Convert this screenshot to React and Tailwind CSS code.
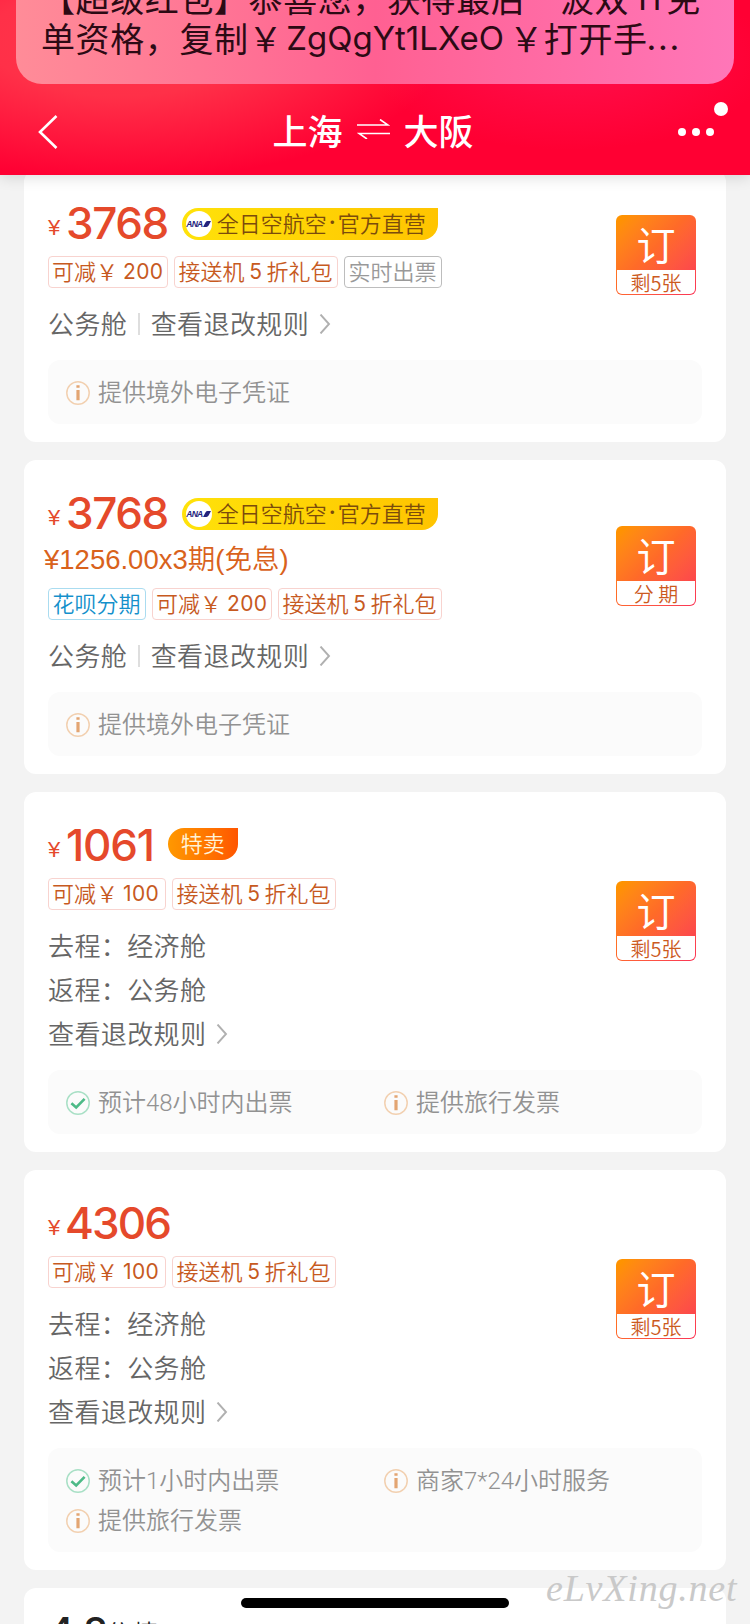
import React from 'react';

const Chevron = () => (
  <svg className="mt-[3px] ml-2.5 h-5 w-3 shrink-0" viewBox="0 0 12 20" fill="none" stroke="#b0b0b0" strokeWidth="1.9">
    <path d="M1.5 0.5L10 10L1.5 19.5" />
  </svg>
);

const InfoIcon = () => (
  <svg className="h-6 w-6 shrink-0" viewBox="0 0 24 24" fill="none">
    <circle cx="12" cy="12" r="11.2" stroke="#f2d0b0" strokeWidth="1.5" />
    <path d="M12 4.2V6.8M12 9V19.2" stroke="#e3a572" strokeWidth="3.2" />
  </svg>
);

const CheckIcon = () => (
  <svg className="h-6 w-6 shrink-0" viewBox="0 0 24 24" fill="none">
    <circle cx="12" cy="12" r="11.2" stroke="#a9e0c6" strokeWidth="1.5" />
    <path d="M5.4 12.2L10.2 16.5L18.6 7.8" stroke="#4dba87" strokeWidth="2.6" />
  </svg>
);

const AirlineBadge = () => (
  <div className="ml-3.5 flex h-8 w-64 shrink-0 items-center rounded-l-[16px] rounded-br-[16px] bg-linear-to-r from-[#ffe20a] to-[#ffc400] pl-1">
    <div className="flex h-[26px] w-[26px] items-center justify-center rounded-full bg-white">
      <span className="font-['Liberation_Sans'] text-[8.5px] leading-none font-bold tracking-[-0.8px] text-[#23237c] italic">ANA</span>
      <svg className="ml-px h-[6px] w-[8px]" viewBox="0 0 8 6">
        <path d="M0 6L2.6 1.2Q3.2 0 4.6 0H8L5.6 4.6Q4.8 6 3.4 6Z" fill="#23237c" />
      </svg>
    </div>
    <span className="ml-[5px] flex pb-1 text-[22px] leading-7 text-[#7b4b0c]">
      全日空航空<span className="w-[11px] text-center font-['Inter'] font-semibold">·</span>官方直营
    </span>
  </div>
);

const SaleBadge = () => (
  <div className="-mt-1 ml-3.5 flex h-8 w-[70px] items-center justify-center rounded-l-[16px] rounded-br-[16px] bg-linear-to-r from-[#ff9800] to-[#ff5500] pb-1 text-[22px] leading-none text-[#fff3d8]">
    特卖
  </div>
);

const Off = ({ value, narrow }) => (
  <div className={`flex h-8 items-center rounded-[4px] border border-[#f8d3cf] pb-[5px] pl-[3px] text-[#c75a1f] ${narrow ? 'w-[118px]' : 'w-[120px]'}`}>
    可减￥<span className="ml-[5px] pt-[3px] font-['Inter'] text-[21px] font-normal tracking-[0.4px]">{value}</span>
  </div>
);

const Gift = () => (
  <div className="flex h-8 w-[164px] items-center rounded-[4px] border border-[#f8d3cf] pb-[5px] pl-[3.5px] text-[#c75a1f]">
    接送机<span className="w-[22px] pt-[3px] text-center font-['Inter'] text-[21px] font-normal">5</span>折礼包
  </div>
);

const Instant = () => (
  <div className="flex h-8 w-[98px] items-center rounded-[4px] border border-[#bdbdbd] pb-[5px] pl-[3.5px] text-[#999]">实时出票</div>
);

const Huabei = () => (
  <div className="flex h-8 w-[98px] items-center rounded-[4px] border border-[#aadcf0] pb-[5px] pl-[3.5px] text-[#1490cb]">花呗分期</div>
);

const BookButton = ({ note }) => (
  <button className="flex h-20 w-20 flex-col rounded-[6px] bg-linear-to-br from-[#ff9300] from-5% via-[#ff6a28] via-45% to-[#fb3355] p-px">
    <span className="flex h-[54px] w-full items-center justify-center text-[39px] leading-none font-normal text-white">订</span>
    <span className="flex w-full grow items-center justify-center rounded-b-[5px] bg-white pt-px text-[20px] leading-none text-[#cc5a1e]">{note}</span>
  </button>
);

const Rules = () => (
  <span className="flex items-center">
    查看退改规则
    <Chevron />
  </span>
);

const Row = ({ children }) => <div className="flex h-11 items-center pb-[3px]">{children}</div>;

function Card({ price, tight, badge, installment, tags, rows, note, notices }) {
  return (
    <section className="rounded-xl bg-white px-6 pb-[18px]">
      <div className="flex items-center justify-between pr-1.5 pb-5">
        <div className="pt-[38px]">
          <div className="flex h-8 items-center">
            <span className="w-[14px] pt-2 font-['Liberation_Sans'] text-[22px] leading-none text-[#e5492b]">¥</span>
            <span className={`-mt-0.5 font-['Inter'] text-[44px] leading-8 font-medium text-[#e5492b] ${tight}`}>{price}</span>
            {badge}
          </div>
          {installment && (
            <div className="-ml-1 flex h-[42px] items-center pt-[18px] font-['Liberation_Sans','Noto_Sans_CJK_SC',sans-serif] text-[27.5px] leading-none whitespace-nowrap text-[#d9621c]">
              {installment}
            </div>
          )}
          <div className="mt-4 flex gap-1.5 text-[22px] leading-none whitespace-nowrap">{tags}</div>
          <div className="mt-[14px] -mb-[6px] text-[26px] leading-none tracking-[0.4px] text-[#666]">{rows}</div>
        </div>
        <BookButton note={note} />
      </div>
      <div className="grid w-[654px] grid-cols-[318px_1fr] rounded-xl bg-[#fbfbfb] pt-[13px] pb-[11px] pl-[18px] text-[24px] leading-none text-[#929292]">
        {notices.map(([ok, text]) => (
          <div key={text} className="flex h-10 items-center gap-2">
            {ok ? <CheckIcon /> : <InfoIcon />}
            <span className="font-['Roboto','Noto_Sans_CJK_SC',sans-serif]">{text}</span>
          </div>
        ))}
      </div>
    </section>
  );
}

const BusinessRow = () => (
  <Row>
    公务舱<span className="mx-[11px] mt-[3px] h-[22px] w-[1.5px] bg-[#dedede]" />
    <Rules />
  </Row>
);

const RoundTripRows = () => (
  <>
    <Row>去程：经济舱</Row>
    <Row>返程：公务舱</Row>
    <Row><Rules /></Row>
  </>
);

export default function App() {
  return (
    <div className="relative flex h-[1624px] w-[750px] flex-col overflow-hidden bg-[#f3f3f3] font-['Noto_Sans_CJK_SC',sans-serif] font-[350]">
      <header className="relative z-10 flex h-[175px] shrink-0 flex-col bg-[#ff0033] bg-[radial-gradient(ellipse_330px_140px_at_120px_40px,#ff364a,#ff3048_40%,transparent),radial-gradient(ellipse_200px_90px_at_570px_60px,#ff0f4c,transparent)] px-4 shadow-[0_2px_14px_rgba(0,0,0,0.14)]">
        <div className="flex h-[84px] shrink-0 flex-col justify-end rounded-b-[26px] bg-linear-to-r from-[#ff8c98] via-[#ff6092] to-[#ff76b8] pr-4 pb-[26px] pl-[25px] text-[34px] leading-[40px] font-normal tracking-[0.6px] whitespace-nowrap text-[#2c0a14]">
          <div className="flex">【超级红包】恭喜您，获得最后一波双<span className="w-[37px] text-center font-['Inter']">11</span>免</div>
          <div className="flex">
            单资格，复制￥<span className="ml-[3px] w-[223px] font-['Inter'] text-[33px] tracking-[0px]">ZgQgYt1LXeO</span>￥打开手<span className="-ml-px font-['Inter'] tracking-[1.6px]">...</span>
          </div>
        </div>
        <nav className="flex h-[91px] shrink-0 items-center justify-between pl-5">
          <svg className="mt-1 h-9 w-10" viewBox="0 0 40 36" fill="none" stroke="#fff" strokeWidth="2.6">
            <path d="M20.5 2L4 18L20.5 34" />
          </svg>
          <div className="ml-0.5 flex items-center text-[35px] leading-none font-medium text-white">
            上海
            <svg className="mx-[14px] mt-[-1px] h-5 w-[33px]" viewBox="0 0 33 20" fill="none" stroke="#fff" strokeWidth="1.6">
              <path d="M0 6H31L23 0.5M33 14.5H2L10 20" />
            </svg>
            大阪
          </div>
          <svg className="-mr-1 h-[60px] w-[70px]" viewBox="0 0 70 60" fill="#fff">
            <circle cx="14" cy="32" r="4" />
            <circle cx="28" cy="32" r="4" />
            <circle cx="42" cy="32" r="4" />
            <circle cx="53" cy="9" r="7" />
          </svg>
        </nav>
      </header>

      <main className="-mt-[5px] flex w-[702px] shrink-0 flex-col gap-[18px] self-center">
        <Card
          price="3768"
          tight="tracking-[-1.4px] ml-1"
          badge={<AirlineBadge />}
          tags={<><Off value="200" /><Gift /><Instant /></>}
          rows={<BusinessRow />}
          note="剩5张"
          notices={[[false, '提供境外电子凭证']]}
        />
        <Card
          price="3768"
          tight="tracking-[-1.4px] ml-1"
          badge={<AirlineBadge />}
          installment="¥1256.00x3期(免息)"
          tags={<><Huabei /><Off value="200" /><Gift /></>}
          rows={<BusinessRow />}
          note="分 期"
          notices={[[false, '提供境外电子凭证']]}
        />
        <Card
          price="1061"
          tight="tracking-[-1.2px] ml-1"
          badge={<SaleBadge />}
          tags={<><Off value="100" narrow /><Gift /></>}
          rows={<RoundTripRows />}
          note="剩5张"
          notices={[[true, '预计48小时内出票'], [false, '提供旅行发票']]}
        />
        <Card
          price="4306"
          tight="tracking-[-1.9px] ml-[3px]"
          tags={<><Off value="100" narrow /><Gift /></>}
          rows={<RoundTripRows />}
          note="剩5张"
          notices={[[true, '预计1小时内出票'], [false, '商家7*24小时服务'], [false, '提供旅行发票']]}
        />
        <section className="h-40 rounded-xl bg-white px-6 pt-[26px]">
          <div className="flex text-[#222]">
            <span className="w-[54px] font-['Inter'] text-[40px] leading-[36px] font-medium tracking-[-0.5px]">4.8</span>
            <span className="ml-1 pt-[3px] text-[24px] leading-[30px]">分</span>
            <span className="ml-1 pt-[3px] text-[24px] leading-[30px]">情</span>
          </div>
        </section>
      </main>

      <div className="absolute top-[1598px] left-[241px] h-[10px] w-[268px] rounded-full bg-black" />
      <div className="absolute top-[1566px] left-[546px] font-['Liberation_Serif',cursive] text-[38px] leading-[44px] tracking-[0.8px] whitespace-nowrap text-[#c9c9c9] italic">eLvXing.net</div>
    </div>
  );
}
